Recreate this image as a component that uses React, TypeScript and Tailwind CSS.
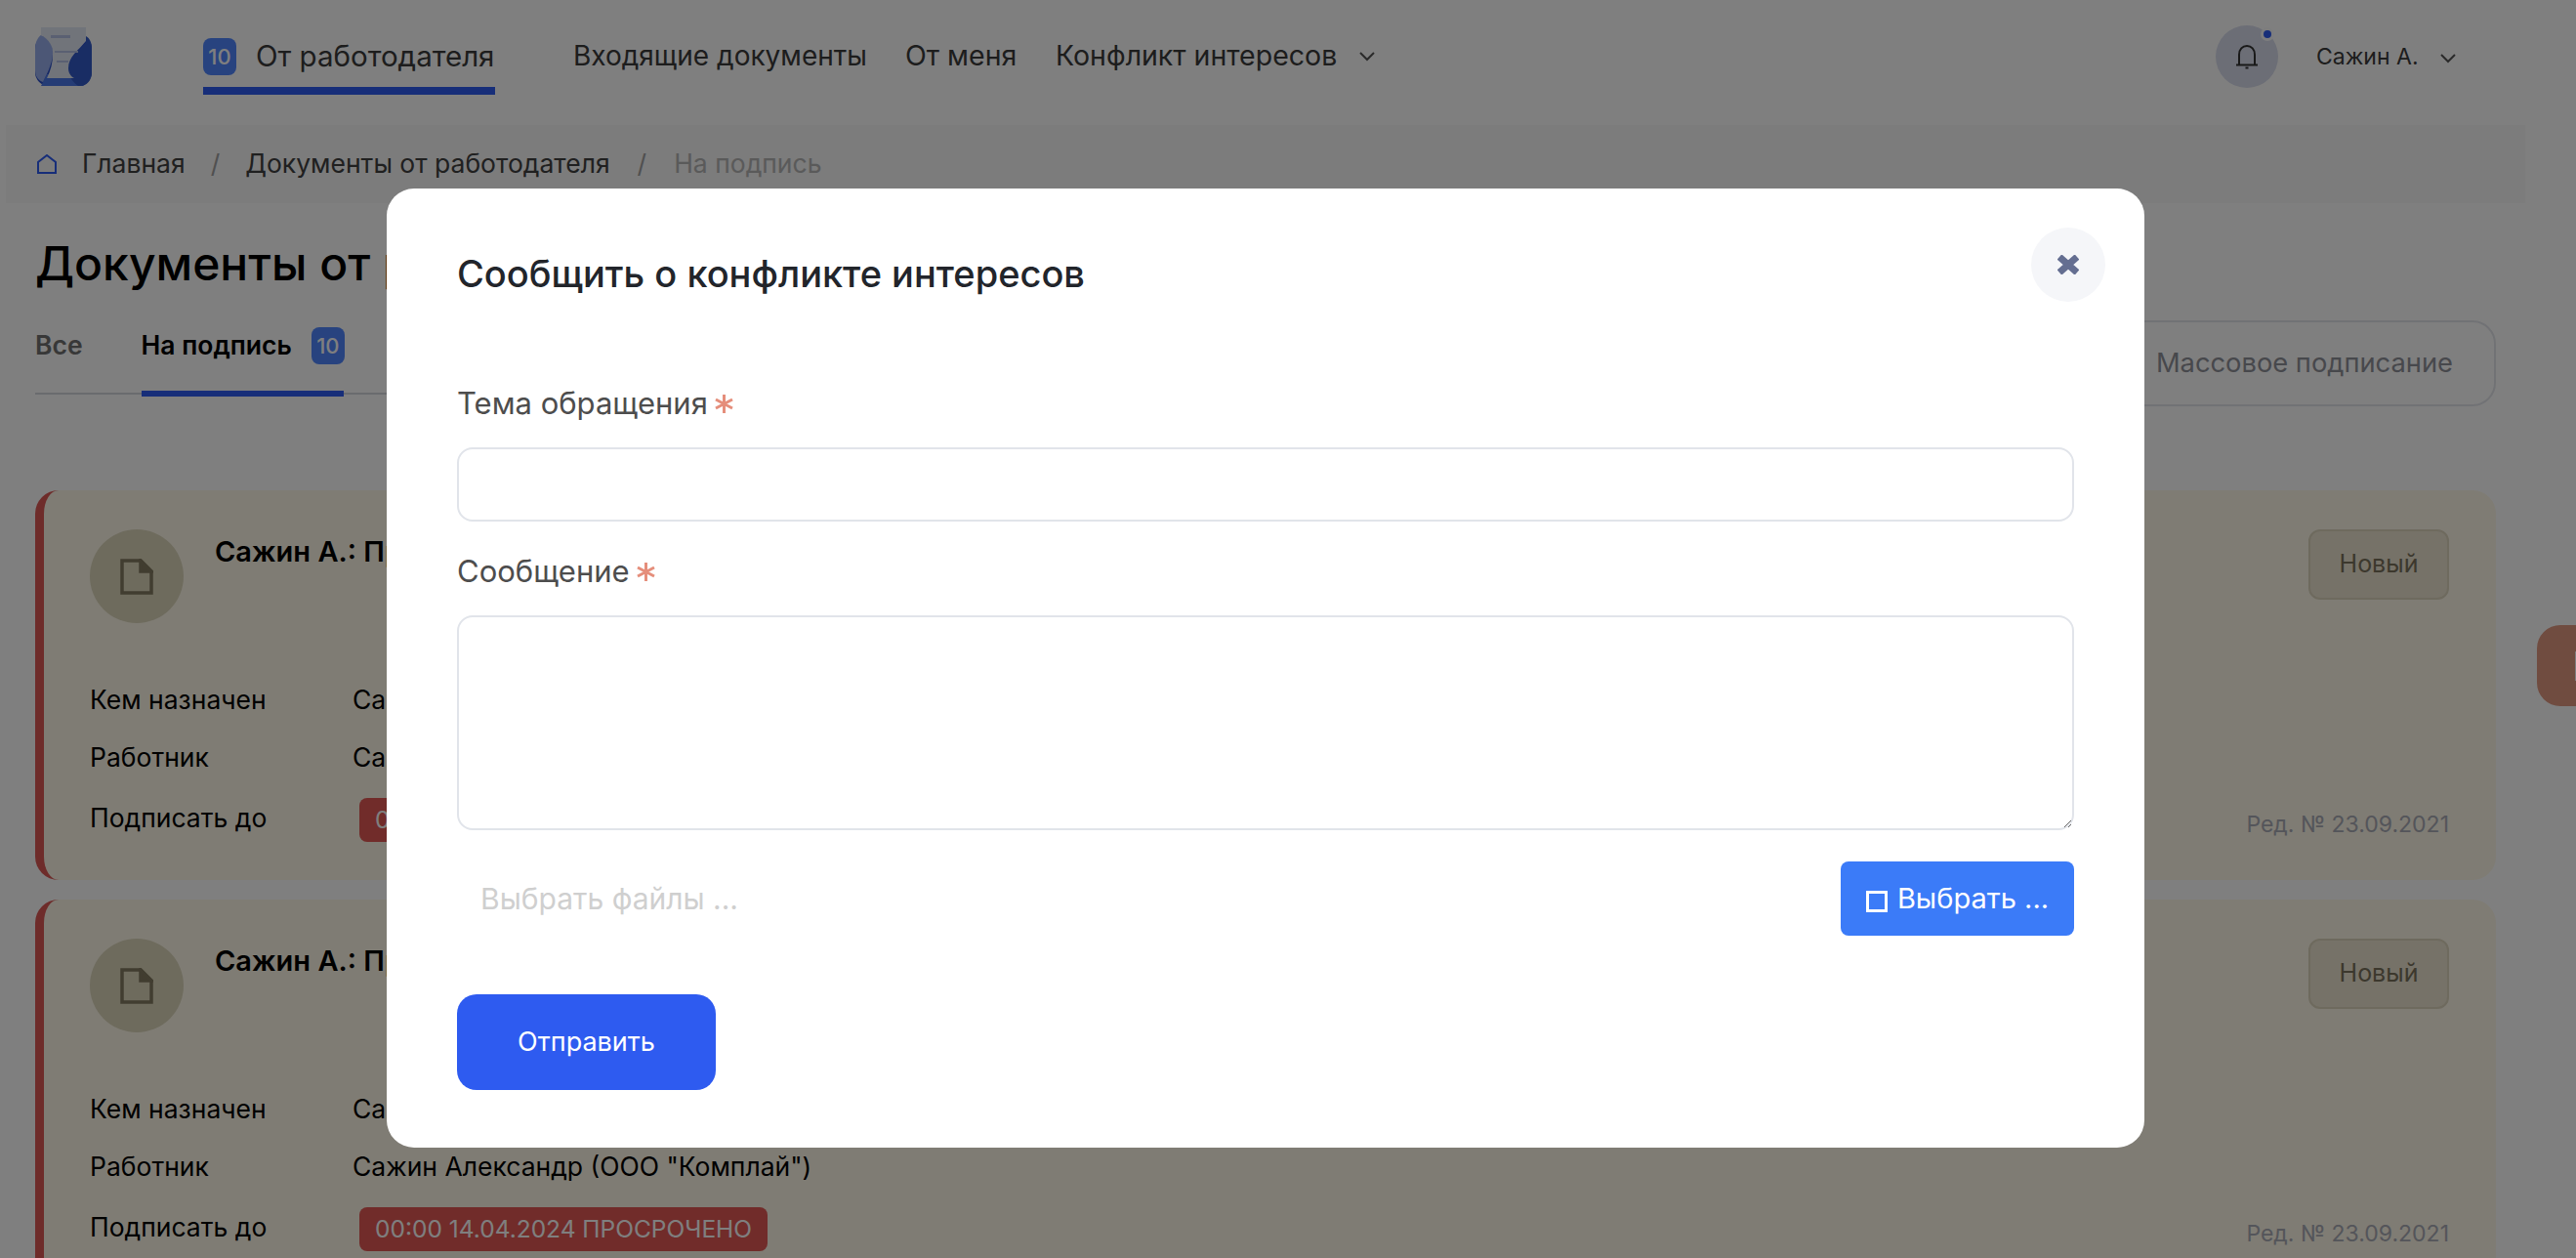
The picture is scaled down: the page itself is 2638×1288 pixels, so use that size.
import { useState } from "react"

const font = "font-['Inter','Noto_Sans',sans-serif]"

const Logo = () => (
  <svg width="58" height="60" viewBox="0 0 58 60">
    <rect x="0" y="8" width="58" height="52" rx="14" fill="#2a4fc8" />
    <path d="M12 48H40L50 60H6Z" fill="#4a78ea" />
    <path d="M0 22C0 14 4 9 6 8C16 12 19 20 18 28C17 38 13 46 8 56C3 54 0 50 0 44Z" fill="#98aeec" />
    <path d="M52 9C56 11 58 16 58 22V46C58 54 53 60 46 60H44C36 54 34 48 34 42C34 30 46 24 52 15Z" fill="#325ac8" />
    <path d="M6 0H52V14C44 24 34 30 34 42C34 46 36 50 40 52H12C16 44 18 36 18 28C19 20 14 12 6 8Z" fill="#e2e8f4" />
    <rect x="16" y="8" width="20" height="3" fill="#b4c0e4" />
    <rect x="20" y="24" width="24" height="2" fill="#b4c0e4" />
    <rect x="22" y="34" width="12" height="2" fill="#b4c0e4" />
  </svg>
)

const Badge = () => (
  <span className="flex h-[38px] w-[34px] shrink-0 items-center justify-center rounded-lg bg-[#5186ff] text-[22px] font-medium text-white">
    10
  </span>
)

const FileIcon = () => (
  <svg width="34" height="37" viewBox="0 0 34 37" fill="none" stroke="#827a60" strokeWidth="3.5">
    <path d="M2 2H21L32 13V35H2Z" />
    <path d="M21 2V13H32Z" fill="#827a60" />
  </svg>
)

const Card = () => (
  <div className="flex h-[399px] flex-col rounded-3xl border-l-[9px] border-[#dc5854] bg-[#fef8e8] pr-[48px] pl-[47px] pt-10">
    <div className="flex">
      <div className="flex h-24 w-24 items-center justify-center rounded-full bg-[#dcd6ba]">
        <FileIcon />
      </div>
      <div className="ml-8 mt-[3px] text-[29px] leading-10 font-semibold text-black">Сажин А.: Приказ о приёме на работу</div>
      <div className="ml-auto flex h-[72px] w-36 items-center justify-center rounded-xl border-2 border-[#dcd4bc] bg-[#ece4d0] text-[25px] text-[#78705a]">
        Новый
      </div>
    </div>
    <div className="mt-[59px] flex flex-col gap-[21px] text-[26.5px] leading-[38px] text-black">
      <div className="flex">
        <span className="w-[269px]">Кем назначен</span>
        <span>Сажин Александр (ООО "Комплай")</span>
      </div>
      <div className="flex">
        <span className="w-[269px]">Работник</span>
        <span>Сажин Александр (ООО "Комплай")</span>
      </div>
      <div className="flex items-center">
        <span className="-mt-1 w-[276px]">Подписать до</span>
        <span className="flex h-[45px] items-center rounded-lg bg-[#e25854] px-4 text-[24.5px] text-white">
          00:00 14.04.2024 ПРОСРОЧЕНО
        </span>
        <span className="ml-auto mt-[10px] text-[23px] text-[#a9abb5]">Ред. № 23.09.2021</span>
      </div>
    </div>
  </div>
)

const Required = ({ children }: { children: string }) => (
  <label className="flex items-center gap-[7px] text-[31px] leading-10 text-[#4d4d4d]">
    {children}
    <svg width="19" height="19" viewBox="0 0 19 19" stroke="#e58e7b" strokeWidth="3">
      <path d="M9.5 0V19M1 5L18 14M18 5L1 14" />
    </svg>
  </label>
)

export default function App() {
  const [subject, setSubject] = useState("")
  const [message, setMessage] = useState("")

  return (
    <div className={`relative h-[1288px] w-[2638px] overflow-hidden bg-white ${font}`}>
      <header className="flex h-32 items-start pl-9 pr-[123px]">
        <div className="mt-7">
          <Logo />
        </div>
        <nav className="ml-[114px] mt-[39px] flex items-start whitespace-nowrap text-[28.5px] text-[#3a3a3a]">
          <div className="flex h-[58px] w-[299px] items-start gap-5 border-b-8 border-[#2f5cf3]">
            <Badge />
            <span className="text-[29.5px] leading-9">От работодателя</span>
          </div>
          <span className="ml-20 w-[300px] text-[28px] leading-9">Входящие документы</span>
          <span className="ml-10 w-[112px] leading-9">От меня</span>
          <span className="ml-[42px] w-[288px] leading-9">Конфликт интересов</span>
          <svg className="ml-[23px] mt-3.5" width="16" height="10" viewBox="0 0 16 10" fill="none" stroke="#555" strokeWidth="2">
            <path d="M1 1L8 8L15 1" />
          </svg>
        </nav>
        <div className="ml-auto mt-[26px] flex items-center">
          <div className="relative flex h-16 w-16 items-center justify-center rounded-full bg-[#d8dcec]">
            <svg width="22" height="25" viewBox="0 0 22 25" fill="none" stroke="#333" strokeWidth="2">
              <path d="M3 20V10C3 4.5 6.5 1 11 1S19 4.5 19 10V20M0 20.5H22" />
              <path d="M9.5 23.5H12.5" />
            </svg>
            <span className="absolute right-1 top-0.5 flex h-[14px] w-[14px] items-center justify-center rounded-full bg-[#fbfbfd]">
              <span className="h-2 w-2 rounded-full bg-[#2f5cf3]"></span>
            </span>
          </div>
          <span className="ml-[39px] w-[104px] whitespace-nowrap text-[23px] text-[#3a3a3a]">Сажин А.</span>
          <svg className="ml-[23px] mt-1" width="16" height="10" viewBox="0 0 16 10" fill="none" stroke="#555" strokeWidth="2">
            <path d="M1 1L8 8L15 1" />
          </svg>
        </div>
      </header>

      <div className="mx-1.5 flex h-20 w-[2580px] items-center bg-[#f8f8f8] pl-8 text-[26.5px]">
        <svg width="20" height="20" viewBox="0 0 20 20" fill="none" stroke="#2f5cf3" strokeWidth="2">
          <path d="M1 19V8L10 1L19 8V19Z" />
        </svg>
        <span className="ml-[26px] text-[#404040]">Главная</span>
        <span className="mx-[26px] text-[#a0a0a0]">/</span>
        <span className="text-[#404040]">Документы от работодателя</span>
        <span className="mx-7 text-[#a0a0a0]">/</span>
        <span className="text-[#b4b4b4]">На подпись</span>
      </div>

      <main className="px-9">
        <h1 className="mt-[30px] text-[48px] leading-[64px] font-medium whitespace-nowrap text-black">Документы от работодателя</h1>
        <div className="mt-[33px] flex h-[67px] w-[2520px] items-start justify-between">
          <div className="h-[69px] w-[2020px] border-b-2 border-[#d5d7dd]">
            <div className="flex items-start text-[26.5px] font-semibold whitespace-nowrap">
              <span className="leading-9 text-[#707070]">Все</span>
              <div className="ml-[60px] flex h-[71px] w-[207px] items-start gap-5 border-b-[6px] border-[#2f5cf3]">
                <span className="leading-9 text-black">На подпись</span>
                <Badge />
              </div>
            </div>
          </div>
          <div className="-mt-[7px] flex h-[88px] w-[450px] items-center justify-end rounded-3xl border-2 border-[#e3e5ea] pr-[42px] text-[27.3px] text-[#8f9099]">
            Массовое подписание
          </div>
        </div>
        <div className="mt-[100px] flex w-[2520px] flex-col gap-5">
          <Card />
          <Card />
        </div>
      </main>

      <div className="absolute right-0 top-[640px] flex h-[83px] w-10 items-center justify-end rounded-l-3xl bg-[#e09880]">
        <span className="h-[30px] w-px bg-white"></span>
      </div>

      <div className="fixed inset-0 z-10 bg-black/50"></div>

      <div className="absolute left-[396px] top-[193px] z-20 h-[982px] w-[1800px] rounded-[28px] bg-white px-[72px] pt-[62px]">
        <div className="flex items-start justify-between">
          <h2 className="text-[38px] leading-[50px] font-medium text-[#22252b]">Сообщить о конфликте интересов</h2>
          <button className="absolute right-10 top-10 flex h-[76px] w-[76px] items-center justify-center rounded-full bg-[#f5f6f9]">
            <svg width="22" height="20" viewBox="0 0 22 20" stroke="#646e91" strokeWidth="7">
              <path d="M2 2L20 18M20 2L2 18" />
            </svg>
          </button>
        </div>
        <div className="mt-[88px]">
          <Required>Тема обращения</Required>
        </div>
        <input
          value={subject}
          onChange={(e) => setSubject(e.target.value)}
          className="mt-[25px] block h-[76px] w-[1656px] rounded-2xl border-2 border-[#e1e4ea] bg-white px-4 outline-none"
        />
        <div className="mt-[31px]">
          <Required>Сообщение</Required>
        </div>
        <textarea
          value={message}
          onChange={(e) => setMessage(e.target.value)}
          className="mt-[25px] block h-[220px] w-[1656px] rounded-2xl border-2 border-[#e1e4ea] bg-white px-4 outline-none"
        />
        <div className="mt-8 flex h-[76px] w-[1656px] items-center justify-between pl-6">
          <span className="text-[30px] text-[#cfcfcf]">Выбрать файлы ...</span>
          <button className="flex h-[76px] w-[239px] items-center justify-center gap-2.5 rounded-lg bg-[#3b7bf8] text-[29px] text-white">
            <span className="mt-1.5 h-[22px] w-[22px] border-[3px] border-white"></span>
            Выбрать ...
          </button>
        </div>
        <button className="mt-[60px] flex h-[98px] w-[265px] items-center justify-center rounded-[20px] bg-[#2e5bf0] text-[27px] text-white">
          Отправить
        </button>
      </div>
    </div>
  )
}
